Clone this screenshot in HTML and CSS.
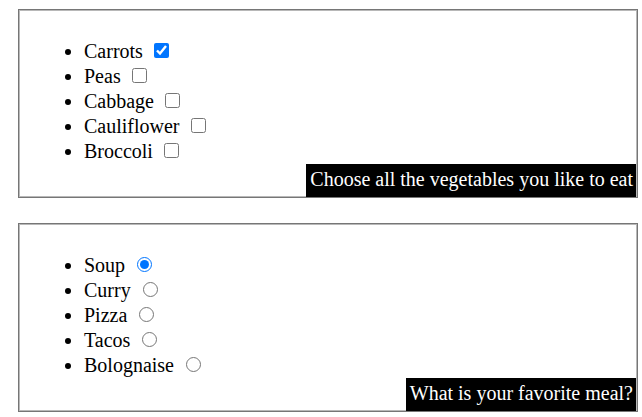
FILE: index.html
```html
<!DOCTYPE html>
<html lang="en">
<head>
<meta charset="utf-8">
<title>Choices</title>
<link rel="stylesheet" href="styles.css">
</head>
<body>
<section class="box">
  <ul class="options">
    <li><label>Carrots <input class="check" type="checkbox" checked></label></li>
    <li><label>Peas <input class="check" type="checkbox"></label></li>
    <li><label>Cabbage <input class="check" type="checkbox"></label></li>
    <li><label>Cauliflower <input class="check" type="checkbox"></label></li>
    <li><label>Broccoli <input class="check" type="checkbox"></label></li>
  </ul>
  <div class="caption">Choose all the vegetables you like to eat</div>
</section>
<section class="box">
  <ul class="options">
    <li><label>Soup <input class="radio" type="radio" name="meal" checked></label></li>
    <li><label>Curry <input class="radio" type="radio" name="meal"></label></li>
    <li><label>Pizza <input class="radio" type="radio" name="meal"></label></li>
    <li><label>Tacos <input class="radio" type="radio" name="meal"></label></li>
    <li><label>Bolognaise <input class="radio" type="radio" name="meal"></label></li>
  </ul>
  <div class="caption">What is your favorite meal?</div>
</section>
</body>
</html>
```
FILE: styles.css
```css
html, body {
  background: #ffffff;
}
body {
  margin: 0;
  padding: 9px 0 0 18px;
  font-family: "Liberation Serif", "Times New Roman", serif;
  font-size: 20px;
  color: #000000;
}
.box {
  width: 620px;
  box-sizing: border-box;
  border: 1px solid #767676;
  box-shadow: inset 0 0 0 1px #b8b8b8;
  display: flex;
  flex-direction: column;
  margin-bottom: 25px;
}
.options {
  margin: 29px 0 0;
  padding: 0 0 0 65px;
  list-style: disc;
}
.options li {
  line-height: 25px;
}
.check {
  width: 15px;
  height: 15px;
  margin: 0 0 1px 6px;
  vertical-align: baseline;
  accent-color: #0075ff;
}
.radio {
  width: 15px;
  height: 15px;
  margin: 0 0 1px 7px;
  vertical-align: baseline;
  accent-color: #0075ff;
}
.caption {
  align-self: flex-end;
  margin-right: 1px;
  background: #000000;
  color: #ffffff;
  line-height: 23px;
  padding: 4px 3px 6px 4px;
}
```
